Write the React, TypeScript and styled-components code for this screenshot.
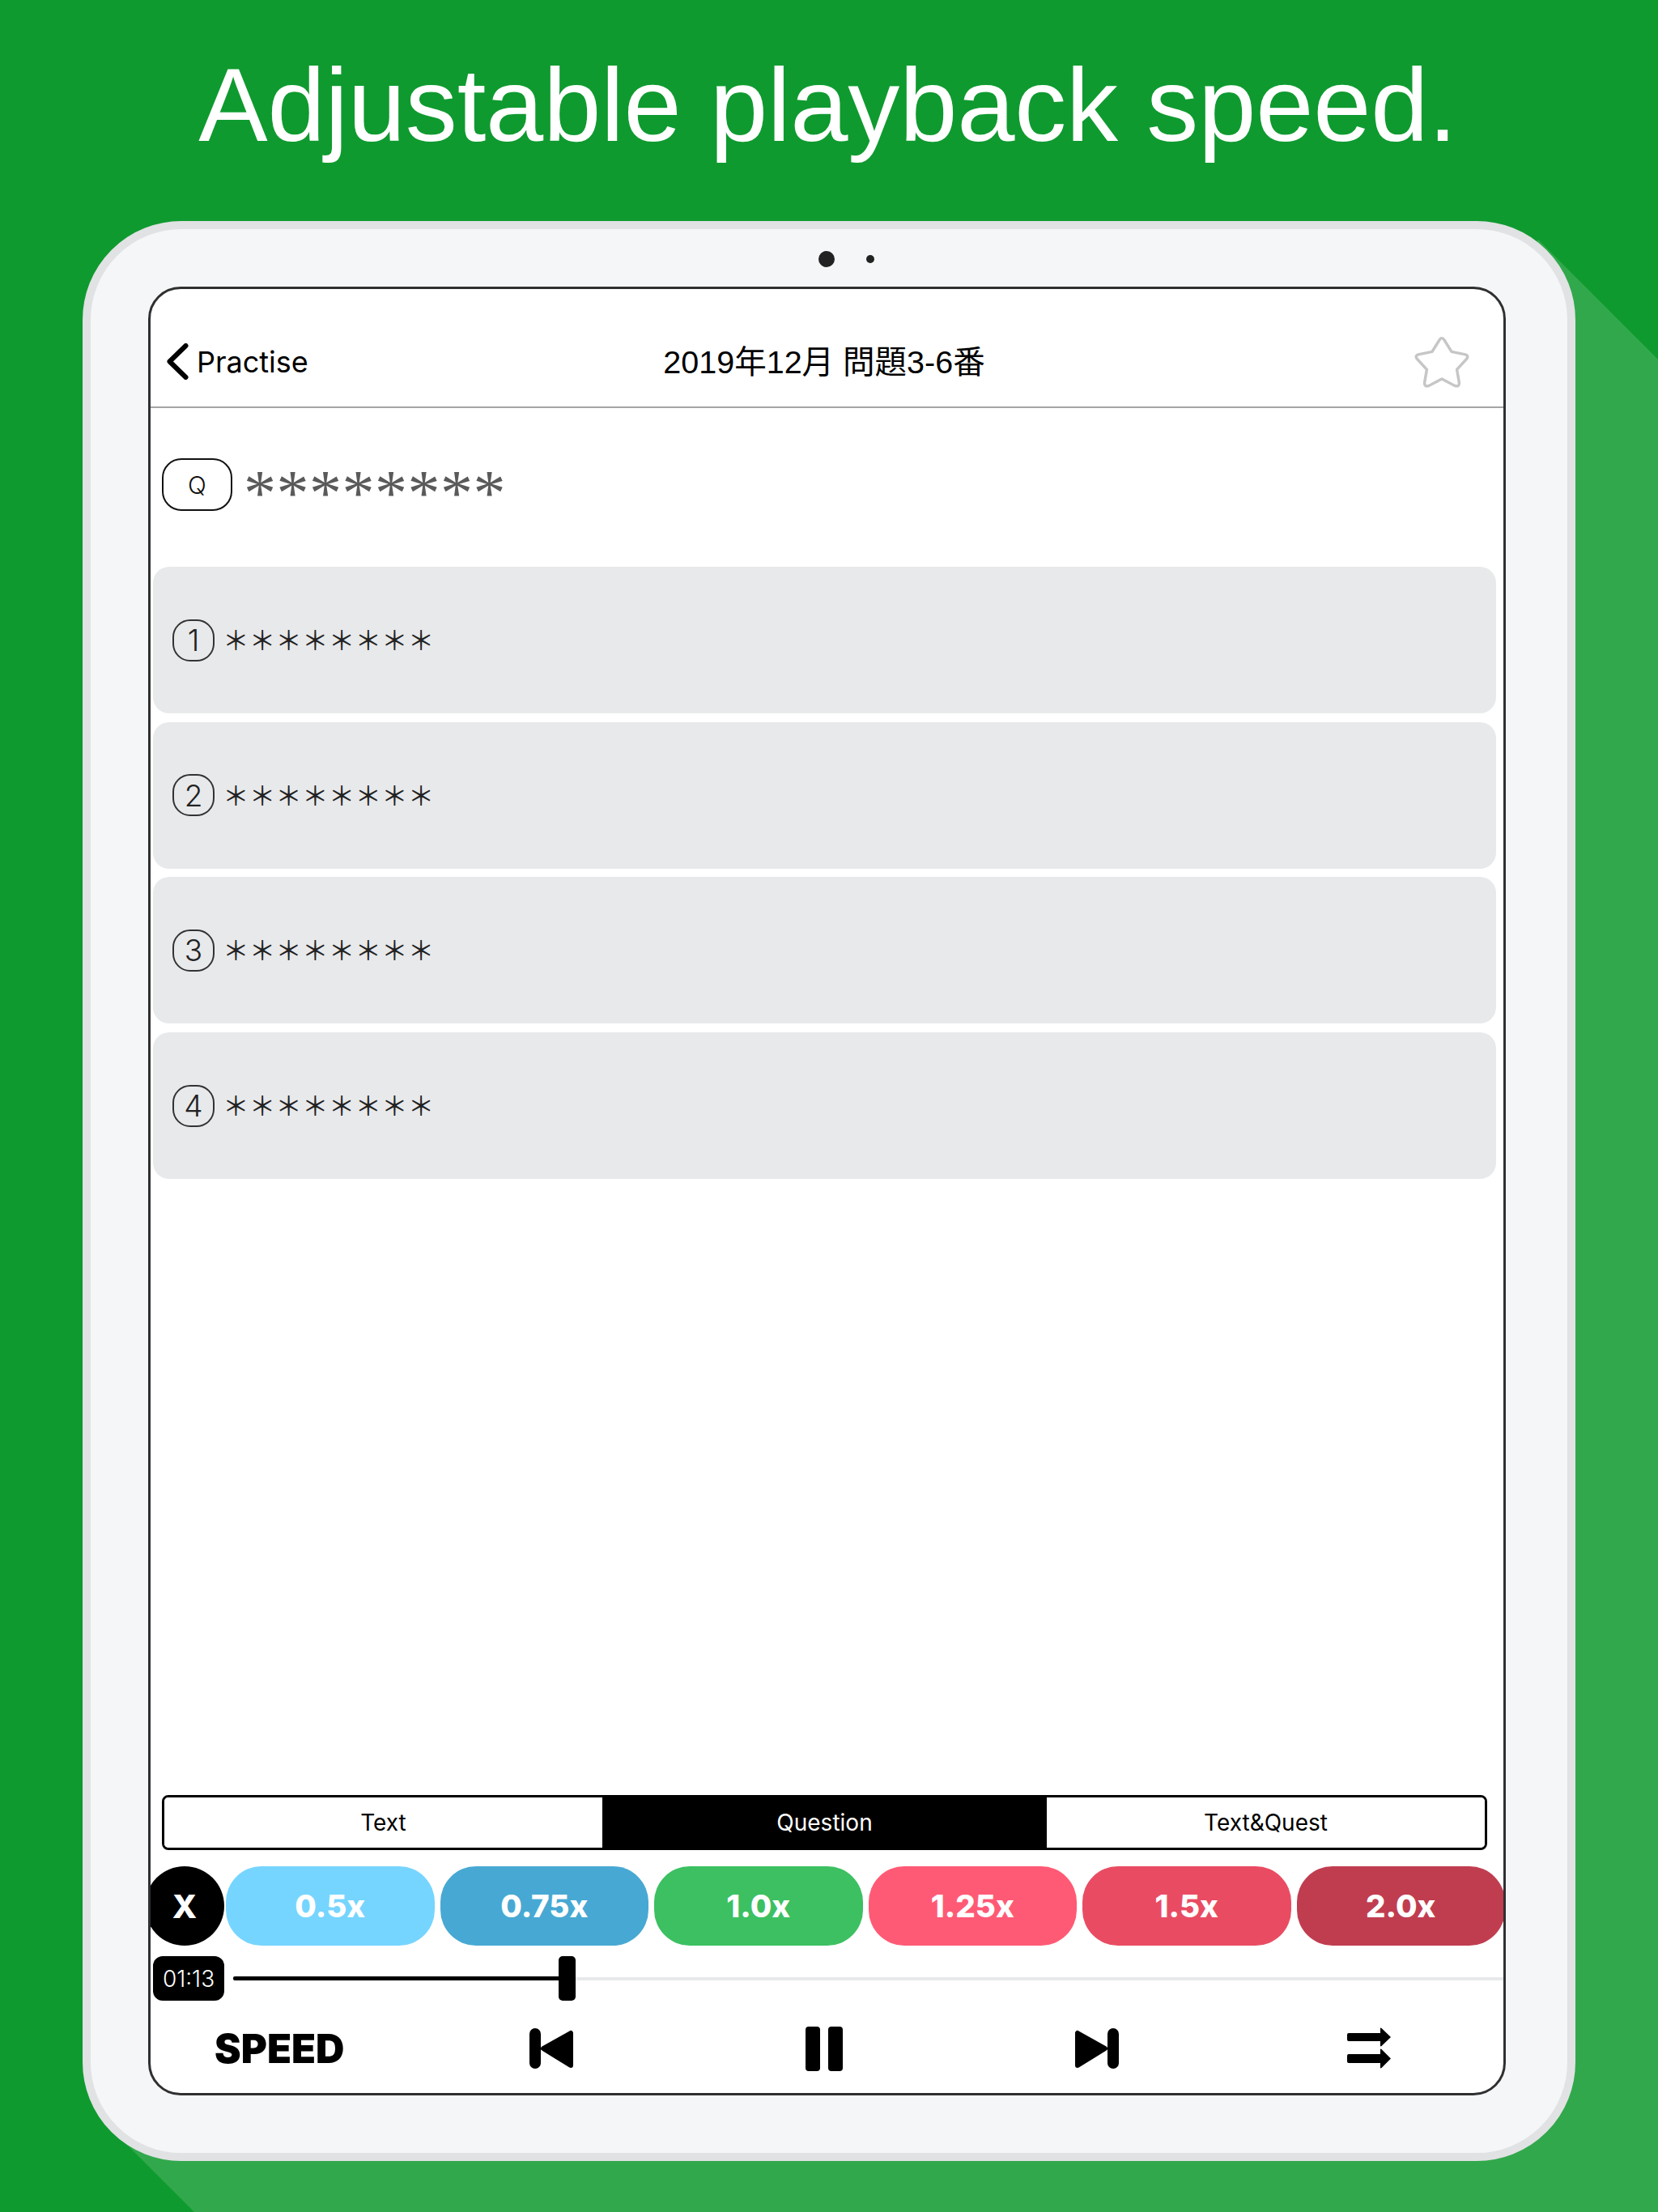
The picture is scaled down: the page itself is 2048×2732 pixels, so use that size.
import React from "react";
import styled, { createGlobalStyle } from "styled-components";

const GlobalStyle = createGlobalStyle`
  html, body {
    margin: 0;
    padding: 0;
    background: #0f9a2f;
  }
  * {
    box-sizing: border-box;
  }
`;

const Page = styled.div`
  position: relative;
  width: 2048px;
  height: 2732px;
  overflow: hidden;
  background: #0f9a2f;
  font-family: Inter, "Noto Sans CJK JP", sans-serif;
  display: flex;
  flex-direction: column;
  /* long flat shadow behind the tablet */
  &::before {
    content: "";
    position: absolute;
    inset: 0;
    background: #32a84c;
    clip-path: polygon(
      1900px 296px,
      2048px 444px,
      2048px 2732px,
      240px 2732px,
      140px 2632px
    );
  }
`;

const Headline = styled.h1`
  position: relative;
  margin: 0;
  height: 273px;
  padding: 56px 3px 0 0;
  text-align: center;
  color: #fff;
  font-family: "Liberation Sans", Arial, sans-serif;
  font-size: 128px;
  font-weight: 400;
  line-height: normal;
  letter-spacing: -0.15px;
  white-space: nowrap;
`;

const Device = styled.div`
  position: relative;
  width: 1844px;
  height: 2396px;
  margin-left: 102px;
  padding: 0 76px 71px 71px;
  display: flex;
  flex-direction: column;
  background: #f5f6f8;
  border: 10px solid #e1e2e4;
  border-radius: 122px;
`;

const CameraBar = styled.div`
  flex: 0 0 71px;
  display: flex;
  align-items: center;
  gap: 39px;
  padding: 3px 0 0 828px;
`;

const Lens = styled.span`
  width: 20px;
  height: 20px;
  border-radius: 50%;
  background: #222;
`;

const Sensor = styled.span`
  width: 10px;
  height: 10px;
  border-radius: 50%;
  background: #222;
`;

const Screen = styled.div`
  flex: 1;
  display: flex;
  flex-direction: column;
  background: #fff;
  border: 3px solid #303030;
  border-radius: 40px;
  overflow: hidden;
`;

const NavBar = styled.div`
  flex: 0 0 147px;
  display: grid;
  grid-template-columns: 1fr auto 1fr;
  align-items: center;
  padding: 34px 41px 0 20px;
  border-bottom: 2px solid #a4a4a4;
`;

const BackLink = styled.div`
  display: flex;
  align-items: center;
  gap: 10px;
  font-size: 36px;
  color: #000;
`;

const NavTitle = styled.div`
  margin: 0 0 6px 14px;
  font-family: "Liberation Sans", "Noto Sans CJK JP", sans-serif;
  font-size: 39.5px;
  color: #000;
  white-space: nowrap;
`;

const StarSlot = styled.div`
  display: flex;
  justify-content: flex-end;
`;

const QuestionRow = styled.div`
  display: flex;
  align-items: center;
  gap: 14px;
  margin: 62px 0 69px 14px;
  height: 65px;
`;

const QuestionBadge = styled.div`
  width: 87px;
  height: 65px;
  display: flex;
  align-items: center;
  justify-content: center;
  border: 2px solid #111;
  border-radius: 24px;
  font-size: 30px;
  font-weight: 300;
  color: #111;
`;

const QuestionStars = styled.div`
  height: 65px;
  font-family: "Liberation Serif", serif;
  font-size: 80px;
  line-height: 86px;
  letter-spacing: 0.5px;
  color: #5a5a5a;
  white-space: nowrap;
`;

const OptionList = styled.div`
  display: flex;
  flex-direction: column;
  gap: 10.7px;
  margin: 0 9px 0 3px;
`;

const OptionRow = styled.div`
  height: 181px;
  display: flex;
  align-items: center;
  gap: 10px;
  padding-left: 24px;
  background: #e8e9eb;
  border-radius: 20px;
`;

const OptionNumber = styled.div`
  width: 52px;
  height: 52px;
  display: flex;
  align-items: center;
  justify-content: center;
  border: 2px solid #333;
  border-radius: 22px;
  font-size: 37px;
  font-weight: 300;
  color: #222;
`;

const OptionStars = styled.div`
  margin-bottom: 4px;
  font-family: "Noto Sans CJK JP", sans-serif;
  font-size: 32.7px;
  font-weight: 400;
  color: #222;
  white-space: nowrap;
`;

const Spacer = styled.div`
  flex: 1;
`;

const Segments = styled.div`
  display: flex;
  height: 68px;
  margin: 0 20px 0 14px;
  border: 3px solid #000;
  border-radius: 8px;
  overflow: hidden;
`;

const Segment = styled.div<{ $active?: boolean }>`
  flex: ${(p) => (p.$active ? "0 0 549px" : "1")};
  display: flex;
  align-items: center;
  justify-content: center;
  font-size: 28px;
  background: ${(p) => (p.$active ? "#000" : "#fff")};
  color: ${(p) => (p.$active ? "#fff" : "#000")};
`;

const SpeedRow = styled.div`
  display: flex;
  gap: 7px;
  height: 98px;
  margin: 20px 0 0 -7px;
`;

const CloseButton = styled.div`
  flex: 0 0 98px;
  margin-right: -5px;
  display: flex;
  align-items: center;
  justify-content: center;
  border-radius: 50%;
  background: #000;
  color: #fff;
  font-size: 40px;
  font-weight: 800;
`;

const SpeedChip = styled.div<{ $color: string }>`
  flex: 0 0 257.5px;
  display: flex;
  align-items: center;
  justify-content: center;
  border-radius: 44px;
  background: ${(p) => p.$color};
  color: #fff;
  font-size: 38.5px;
  font-weight: 800;
`;

const TimeRow = styled.div`
  display: flex;
  align-items: center;
  gap: 11px;
  height: 55px;
  margin: 13px 0 0 3px;
`;

const TimeBadge = styled.div`
  flex: 0 0 88px;
  height: 55px;
  display: flex;
  align-items: center;
  justify-content: center;
  border-radius: 12px;
  background: #000;
  color: #fff;
  font-size: 28px;
  font-weight: 300;
`;

const Slider = styled.div`
  flex: 1;
  display: flex;
  align-items: center;
`;

const SliderFill = styled.div<{ $width: number }>`
  flex: 0 0 ${(p) => p.$width}px;
  height: 5px;
  border-radius: 2px 0 0 2px;
  background: #000;
`;

const SliderThumb = styled.div`
  flex: 0 0 21px;
  height: 55px;
  border-radius: 5px;
  background: #000;
`;

const SliderRest = styled.div`
  flex: 1;
  height: 4px;
  background: #e8e9eb;
`;

const Controls = styled.div`
  flex: 0 0 114px;
  display: grid;
  grid-template-columns: repeat(5, 336.5px);
  align-items: center;
  justify-items: center;
  margin-left: -9px;
  padding-top: 4px;
`;

const SpeedLabel = styled.div`
  font-size: 49px;
  font-weight: 900;
  color: #000;
`;

const speeds = [
  { label: "0.5x", color: "#76d5ff" },
  { label: "0.75x", color: "#47a9d3" },
  { label: "1.0x", color: "#3cc062" },
  { label: "1.25x", color: "#ff5a75" },
  { label: "1.5x", color: "#e94c62" },
  { label: "2.0x", color: "#c03d50" },
];

function Chevron(): React.JSX.Element {
  return (
    <svg width="27" height="45" viewBox="0 0 27 45">
      <polyline
        points="23.5,3 3.5,22.5 23.5,42"
        fill="none"
        stroke="#000"
        strokeWidth="6"
        strokeLinecap="round"
        strokeLinejoin="round"
      />
    </svg>
  );
}

function StarOutline(): React.JSX.Element {
  return (
    <svg width="70" height="65" viewBox="1 0.5 64 62" preserveAspectRatio="none">
      <path
        d="M30 6.5Q33 1.5 36 6.5L44 20L58.5 23Q64.5 24.5 60.5 29L50 41L52.5 56Q53 62 47.5 60L33 52L18.5 60Q13 62 13.5 56L16 41L5.5 29Q1.5 24.5 7.5 23L22 20Z"
        fill="none"
        stroke="#c6c6c6"
        strokeWidth="3.2"
        strokeLinejoin="round"
      />
    </svg>
  );
}

function SkipIcon({ flip }: { flip?: boolean }): React.JSX.Element {
  return (
    <svg
      width="55"
      height="50"
      viewBox="0 0 55 50"
      transform={flip ? "scale(-1 1)" : undefined}
    >
      <rect x="0" y="0" width="14" height="50" rx="7" />
      <polygon
        points="17,25 51,6 51,46"
        stroke="#000"
        strokeWidth="6"
        strokeLinejoin="round"
      />
    </svg>
  );
}

function PauseIcon(): React.JSX.Element {
  return (
    <svg width="46" height="55" viewBox="0 0 46 55">
      <rect x="0" y="0" width="18" height="55" rx="4" />
      <rect x="28" y="0" width="18" height="55" rx="4" />
    </svg>
  );
}

function RepeatIcon(): React.JSX.Element {
  return (
    <svg width="55" height="52" viewBox="0 0 55 52">
      <path d="M2 7H41V1.5Q41 0 42.5 1L54 12L42.5 23Q41 24 41 22.5V17H2Q0 17 0 15V9Q0 7 2 7Z" />
      <path d="M2 33H41V27.5Q41 26 42.5 27L54 38.5L42.5 50Q41 51 41 49.5V44H2Q0 44 0 42V35Q0 33 2 33Z" />
    </svg>
  );
}

function App(): React.JSX.Element {
  return (
    <Page>
      <GlobalStyle />
      <Headline>Adjustable playback speed.</Headline>
      <Device>
        <CameraBar>
          <Lens />
          <Sensor />
        </CameraBar>
        <Screen>
          <NavBar>
            <BackLink>
              <Chevron />
              Practise
            </BackLink>
            <NavTitle>2019年12月 問題3-6番</NavTitle>
            <StarSlot>
              <StarOutline />
            </StarSlot>
          </NavBar>
          <QuestionRow>
            <QuestionBadge>Q</QuestionBadge>
            <QuestionStars>********</QuestionStars>
          </QuestionRow>
          <OptionList>
            {[1, 2, 3, 4].map((n) => (
              <OptionRow key={n}>
                <OptionNumber>{n}</OptionNumber>
                <OptionStars>＊＊＊＊＊＊＊＊</OptionStars>
              </OptionRow>
            ))}
          </OptionList>
          <Spacer />
          <Segments>
            <Segment>Text</Segment>
            <Segment $active>Question</Segment>
            <Segment>Text&amp;Quest</Segment>
          </Segments>
          <SpeedRow>
            <CloseButton>X</CloseButton>
            {speeds.map((s) => (
              <SpeedChip key={s.label} $color={s.color}>
                {s.label}
              </SpeedChip>
            ))}
          </SpeedRow>
          <TimeRow>
            <TimeBadge>01:13</TimeBadge>
            <Slider>
              <SliderFill $width={402} />
              <SliderThumb />
              <SliderRest />
            </Slider>
          </TimeRow>
          <Controls>
            <SpeedLabel>SPEED</SpeedLabel>
            <SkipIcon />
            <PauseIcon />
            <SkipIcon flip />
            <RepeatIcon />
          </Controls>
        </Screen>
      </Device>
    </Page>
  );
}

export default App;
